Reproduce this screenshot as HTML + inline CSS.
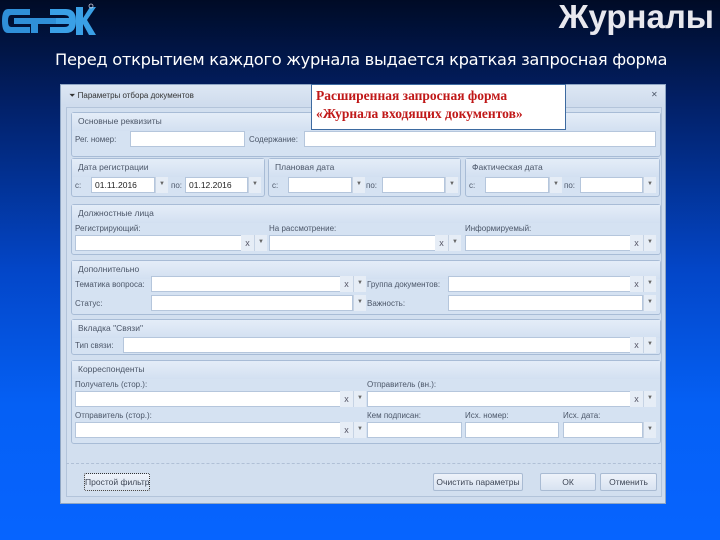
<!DOCTYPE html>
<html><head><meta charset="utf-8"><style>
*{margin:0;padding:0;box-sizing:border-box}
body{width:720px;height:540px;overflow:hidden;position:relative;font-family:"Liberation Sans",sans-serif;
background:linear-gradient(180deg,#000b26 0%,#02216a 20%,#0346c8 50%,#0560f5 75%,#0664ff 100%);}
.a{position:absolute}
.dlg{left:60px;top:84px;width:606px;height:420px;background:#cfdced;border:1px solid #8fa6c4;}
.grp{position:absolute;border:1px solid #a8bcd6;border-radius:3px;background:#d5e2f2}
.gh{position:absolute;left:0;right:0;top:0;height:18px;background:linear-gradient(#e4edf8,#d3e0f1);font-size:8.5px;color:#4b5668;padding:3px 6px;white-space:nowrap}
.lb{position:absolute;font-size:8px;color:#4b5668;white-space:nowrap}
.in{position:absolute;background:#fff;border:1px solid #b5c6dc;height:16px;font-size:8.5px;padding:2px 3px;color:#222}
.dd{position:absolute;width:13px;height:16px;background:#e6edf6;border-left:1px solid #c6d3e4;font-size:6px;color:#666;text-align:center;line-height:15px}
.x{position:absolute;width:13px;height:16px;font-size:9px;color:#556;text-align:center;line-height:16px;background:#e6edf6}
.btn{position:absolute;height:18px;border:1px solid #a9bbd3;border-radius:2px;background:linear-gradient(#eef3fa,#d8e3f1);font-size:8.5px;color:#3d4555;text-align:center;line-height:16px;white-space:nowrap;overflow:hidden}
</style></head><body>
<svg class="a" style="left:0;top:3px" width="96" height="36" viewBox="0 0 96 36">
<path d="M30 6 H8 Q2 6 2 18 Q2 30 8 30 H30 V24 H11 Q8 24 8 18 Q8 12 11 12 H30Z" fill="#2f8fd8"/>
<path d="M14 15 H56 V21 H38 V30 H31 V21 H14Z" fill="#2f8fd8"/>
<path d="M50 6 H66 Q76 6 76 18 Q76 30 66 30 H50 V24 H64 Q69 24 69 21 H56 V15 H69 Q69 12 64 12 H50Z" fill="#3aa0e6"/>
<path d="M76 4 H83 V15 L90 4 H96 L87 17 L96 32 H89 L83 21 V32 H76Z" fill="#3aa0e6"/>
<circle cx="91" cy="3" r="2" fill="none" stroke="#ccd" stroke-width=".8"/>
</svg>
<div class="a" style="right:6px;top:-2px;font-size:33px;font-weight:bold;color:#e8e8ee">Журналы</div>
<div class="a" style="left:55px;top:50px;font-size:16.3px;color:#fff;font-family:'DejaVu Sans',sans-serif;letter-spacing:-0.3px;white-space:nowrap">Перед открытием каждого журнала выдается краткая запросная форма</div>

<div class="a dlg">
 <div class="a" style="left:0;top:0;width:604px;height:20px;background:linear-gradient(#dde7f4,#cfdced)"></div>
 <div class="lb" style="left:8px;top:6px;color:#333">⏷ Параметры отбора документов</div>
 <div class="lb" style="left:590px;top:5px">✕</div>
 <div class="a" style="left:5px;top:22px;width:596px;height:390px;border:1px solid #b3c4da;background:#d2dfef"></div>
</div>

<div class="grp" style="left:71px;top:112px;width:590px;height:45px"><div class="gh">Основные реквизиты</div></div>
<div class="lb" style="left:75px;top:135px">Рег. номер:</div>
<div class="in" style="left:130px;top:131px;width:115px"></div>
<div class="lb" style="left:249px;top:135px">Содержание:</div>
<div class="in" style="left:304px;top:131px;width:352px"></div>

<div class="grp" style="left:71px;top:158px;width:194px;height:39px"><div class="gh">Дата регистрации</div></div>
<div class="grp" style="left:268px;top:158px;width:193px;height:39px"><div class="gh">Плановая дата</div></div>
<div class="grp" style="left:465px;top:158px;width:195px;height:39px"><div class="gh">Фактическая дата</div></div>
<div class="lb" style="left:75px;top:181px">с:</div><div class="in" style="left:91px;top:177px;width:64px">01.11.2016</div><div class="dd" style="left:155px;top:177px">▼</div>
<div class="lb" style="left:171px;top:181px">по:</div><div class="in" style="left:185px;top:177px;width:63px">01.12.2016</div><div class="dd" style="left:248px;top:177px">▼</div>
<div class="lb" style="left:272px;top:181px">с:</div><div class="in" style="left:288px;top:177px;width:64px"></div><div class="dd" style="left:352px;top:177px">▼</div>
<div class="lb" style="left:366px;top:181px">по:</div><div class="in" style="left:382px;top:177px;width:63px"></div><div class="dd" style="left:445px;top:177px">▼</div>
<div class="lb" style="left:469px;top:181px">с:</div><div class="in" style="left:485px;top:177px;width:64px"></div><div class="dd" style="left:549px;top:177px">▼</div>
<div class="lb" style="left:564px;top:181px">по:</div><div class="in" style="left:580px;top:177px;width:63px"></div><div class="dd" style="left:643px;top:177px">▼</div>

<div class="grp" style="left:71px;top:204px;width:590px;height:51px"><div class="gh">Должностные лица</div></div>
<div class="lb" style="left:75px;top:224px">Регистрирующий:</div>
<div class="lb" style="left:269px;top:224px">На рассмотрение:</div>
<div class="lb" style="left:465px;top:224px">Информируемый:</div>
<div class="in" style="left:75px;top:235px;width:167px"></div><div class="x" style="left:241px;top:235px">x</div><div class="dd" style="left:254px;top:235px">▼</div>
<div class="in" style="left:269px;top:235px;width:167px"></div><div class="x" style="left:435px;top:235px">x</div><div class="dd" style="left:448px;top:235px">▼</div>
<div class="in" style="left:465px;top:235px;width:166px"></div><div class="x" style="left:630px;top:235px">x</div><div class="dd" style="left:643px;top:235px">▼</div>

<div class="grp" style="left:71px;top:260px;width:590px;height:55px"><div class="gh">Дополнительно</div></div>
<div class="lb" style="left:75px;top:280px">Тематика вопроса:</div>
<div class="in" style="left:151px;top:276px;width:190px"></div><div class="x" style="left:340px;top:276px">x</div><div class="dd" style="left:353px;top:276px">▼</div>
<div class="lb" style="left:367px;top:280px">Группа документов:</div>
<div class="in" style="left:448px;top:276px;width:183px"></div><div class="x" style="left:630px;top:276px">x</div><div class="dd" style="left:643px;top:276px">▼</div>
<div class="lb" style="left:75px;top:299px">Статус:</div>
<div class="in" style="left:151px;top:295px;width:202px"></div><div class="dd" style="left:353px;top:295px">▼</div>
<div class="lb" style="left:367px;top:299px">Важность:</div>
<div class="in" style="left:448px;top:295px;width:195px"></div><div class="dd" style="left:643px;top:295px">▼</div>

<div class="grp" style="left:71px;top:319px;width:590px;height:36px"><div class="gh">Вкладка "Связи"</div></div>
<div class="lb" style="left:75px;top:341px">Тип связи:</div>
<div class="in" style="left:123px;top:337px;width:508px"></div><div class="x" style="left:630px;top:337px">x</div><div class="dd" style="left:643px;top:337px">▼</div>

<div class="grp" style="left:71px;top:360px;width:590px;height:84px"><div class="gh">Корреспонденты</div></div>
<div class="lb" style="left:75px;top:380px">Получатель (стор.):</div>
<div class="lb" style="left:367px;top:380px">Отправитель (вн.):</div>
<div class="in" style="left:75px;top:391px;width:266px"></div><div class="x" style="left:340px;top:391px">x</div><div class="dd" style="left:353px;top:391px">▼</div>
<div class="in" style="left:367px;top:391px;width:264px"></div><div class="x" style="left:630px;top:391px">x</div><div class="dd" style="left:643px;top:391px">▼</div>
<div class="lb" style="left:75px;top:411px">Отправитель (стор.):</div>
<div class="lb" style="left:367px;top:411px">Кем подписан:</div>
<div class="lb" style="left:465px;top:411px">Исх. номер:</div>
<div class="lb" style="left:563px;top:411px">Исх. дата:</div>
<div class="in" style="left:75px;top:422px;width:266px"></div><div class="x" style="left:340px;top:422px">x</div><div class="dd" style="left:353px;top:422px">▼</div>
<div class="in" style="left:367px;top:422px;width:95px"></div>
<div class="in" style="left:465px;top:422px;width:94px"></div>
<div class="in" style="left:563px;top:422px;width:80px"></div><div class="dd" style="left:643px;top:422px">▼</div>

<div class="a" style="left:66px;top:463px;width:595px;border-top:1px dashed #b0c0d6"></div>
<div class="btn" style="left:84px;top:473px;width:66px;border:1px dotted #333">Простой фильтр</div>
<div class="btn" style="left:433px;top:473px;width:90px">Очистить параметры</div>
<div class="btn" style="left:540px;top:473px;width:56px">ОК</div>
<div class="btn" style="left:600px;top:473px;width:57px">Отменить</div>

<div class="a" style="left:311px;top:84px;width:255px;height:46px;background:#fff;border:1px solid #3d6aa0;padding:2px 4px;font-family:'Liberation Serif',serif;font-weight:bold;color:#c01818;font-size:13.5px;line-height:18px;white-space:nowrap">Расширенная запросная форма<br>«Журнала входящих документов»</div>
</body></html>
